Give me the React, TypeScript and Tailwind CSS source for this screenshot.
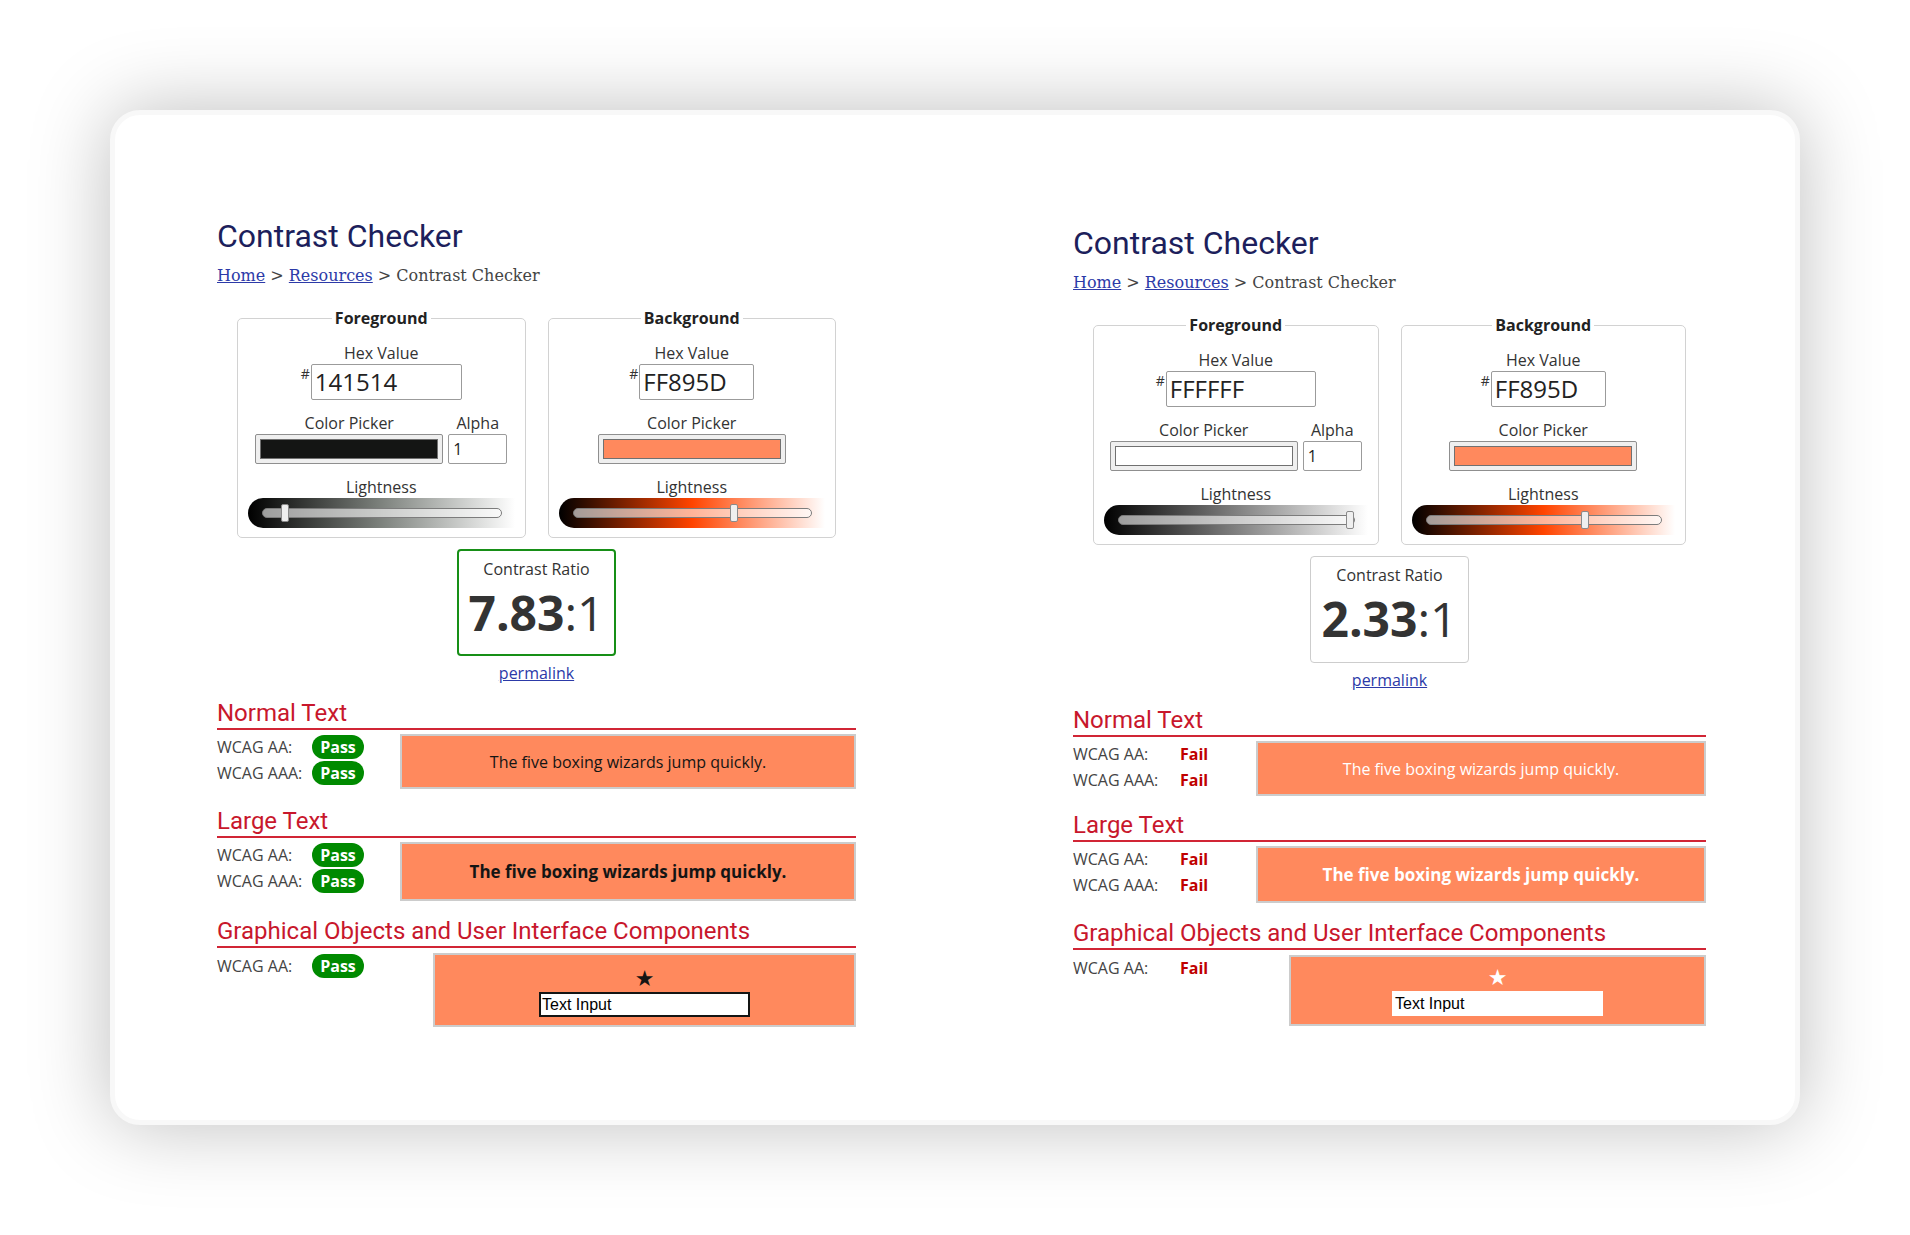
import React from 'react';

type Side = {
  fgHex: string;
  fgHexW: string;
  fgSwatch: string;
  fgGradient: string;
  fgLight: number;
  ratio: string;
  ratioBox: string;
  pass: boolean;
  sampleText: string;
  starText: string;
  inputBorder: string;
  width: string;
  shift: string;
  largeGap: string;
  largeH: string;
  graphH: string;
};

const sides: Side[] = [
  {
    fgHex: '141514',
    fgHexW: 'w-[151px]',
    fgSwatch: 'bg-[#141514]',
    fgGradient: 'bg-[linear-gradient(to_right,#000_0%,#7d827d_50%,#fff_100%)]',
    fgLight: 8,
    ratio: '7.83',
    ratioBox: 'border-2 border-[#178f17]',
    pass: true,
    sampleText: 'text-[#141514]',
    starText: 'text-[#141514]',
    inputBorder: 'border-[#141514]',
    width: 'w-[639px]',
    shift: '',
    largeGap: 'mt-[18px]',
    largeH: 'h-[59px]',
    graphH: 'h-[74px]',
  },
  {
    fgHex: 'FFFFFF',
    fgHexW: 'w-[150px]',
    fgSwatch: 'bg-white',
    fgGradient: 'bg-[linear-gradient(to_right,#000_0%,#808080_50%,#fff_100%)]',
    fgLight: 100,
    ratio: '2.33',
    ratioBox: 'border border-[#cdcdcd]',
    pass: false,
    sampleText: 'text-white',
    starText: 'text-white',
    inputBorder: 'border-white',
    width: 'w-[633px]',
    shift: 'mt-[7px]',
    largeGap: 'mt-[15px]',
    largeH: 'h-[57px]',
    graphH: 'h-[71px]',
  },
];

const bgGradient = 'bg-[linear-gradient(to_right,#000_0%,#ff4400_50%,#fff_100%)]';

function Slider({ gradient, light }: { gradient: string; light: number }) {
  return (
    <div className={`h-[30px] w-full rounded-l-full flex items-center pl-[14px] pr-[13px] ${gradient}`}>
      <div className="relative flex-1 h-[10px] rounded-full border border-[#7c7c7c] bg-white/60">
        <div
          className="absolute top-1/2 -translate-y-1/2 -translate-x-1/2 w-[8px] h-[18px] rounded-[2px] border border-[#8a8a8a] bg-[#efefef]"
          style={{ left: `calc(4px + (100% - 8px) * ${light / 100})` }}
        />
      </div>
    </div>
  );
}

function ColorField({
  title,
  hex,
  hexW,
  swatch,
  alpha,
  gradient,
  light,
}: {
  title: string;
  hex: string;
  hexW: string;
  swatch: string;
  alpha: boolean;
  gradient: string;
  light: number;
}) {
  return (
    <fieldset className="flex-1 min-w-0 rounded-[5px] border border-[#d2d2d2] px-[10px] pt-[12px] pb-[9px] text-center text-[#333]">
      <legend className="mx-auto px-[3px] text-[16px] leading-[24px] font-bold text-[#222]">{title}</legend>
      <div className="text-[16px] leading-[22px]">Hex Value</div>
      <div className="flex justify-center items-start">
        <span className="text-[14px] leading-[14px] mt-[3px] mr-[1px]">#</span>
        <div className={`h-[36px] ${hexW} border border-[#9b9b9b] rounded-[2px] pl-[3px] text-left text-[24px] leading-[34px] text-[#222]`}>
          {hex}
        </div>
      </div>
      <div className="mt-[12px] flex justify-center gap-[5px]">
        <div className="flex flex-col items-center">
          <div className="text-[16px] leading-[22px]">Color Picker</div>
          <div className="w-[188px] h-[30px] border border-[#8f8f8f] rounded-[2px] bg-[#efefef] p-[4px]">
            <div className={`h-full border border-[#707070] ${swatch}`} />
          </div>
        </div>
        {alpha && (
          <div className="flex flex-col items-center">
            <div className="text-[16px] leading-[22px]">Alpha</div>
            <div className="w-[59px] h-[30px] border border-[#9b9b9b] rounded-[2px] pl-[4px] text-left text-[16px] leading-[28px] text-[#222]">
              1
            </div>
          </div>
        )}
      </div>
      <div className="mt-[12px] text-[16px] leading-[22px]">Lightness</div>
      <Slider gradient={gradient} light={light} />
    </fieldset>
  );
}

function Heading({ children, className }: { children: React.ReactNode; className: string }) {
  return (
    <h2
      className={`font-['Roboto',sans-serif] text-[24px] leading-[28px] text-[#c8172c] border-b-2 border-[#d12535] pb-[1px] ${className}`}
    >
      {children}
    </h2>
  );
}

function Result({ label, pass, labelW }: { label: string; pass: boolean; labelW: string }) {
  return (
    <div className="flex items-center h-[26px]">
      <span className={`${labelW} shrink-0 text-[16px] text-[#444]`}>{label}</span>
      {pass ? (
        <span className="inline-flex items-center justify-center w-[52px] h-[24px] rounded-full bg-[#008a00] text-white font-bold text-[16px]">
          Pass
        </span>
      ) : (
        <span className="text-[#c00000] font-bold text-[16px]">Fail</span>
      )}
    </div>
  );
}

function Checker({ s }: { s: Side }) {
  const labelW = s.pass ? 'w-[95px]' : 'w-[107px]';
  return (
    <div className={`${s.width} ${s.shift} shrink-0`}>
      <h1 className="font-['Roboto',sans-serif] text-[32px] leading-[36px] text-[#1d1f5c]">Contrast Checker</h1>
      <div className="mt-[10px] font-['DejaVu_Serif',serif] text-[16px] leading-[24px] text-[#444]">
        <a className="underline text-[#2c3aa8]">Home</a> &gt; <a className="underline text-[#2c3aa8]">Resources</a> &gt; Contrast
        Checker
      </div>

      <div className="mt-[18px] flex gap-[22px] px-[20px]">
        <ColorField
          title="Foreground"
          hex={s.fgHex}
          hexW={s.fgHexW}
          swatch={s.fgSwatch}
          alpha
          gradient={s.fgGradient}
          light={s.fgLight}
        />
        <ColorField
          title="Background"
          hex="FF895D"
          hexW="w-[115px]"
          swatch="bg-[#ff895d]"
          alpha={false}
          gradient={bgGradient}
          light={68}
        />
      </div>

      <div className={`mx-auto mt-[11px] w-[159px] h-[107px] rounded-[4px] ${s.ratioBox} flex flex-col items-center text-[#333]`}>
        <div className="mt-[7px] text-[16px] leading-[22px]">Contrast Ratio</div>
        <div className="mt-[9px] text-[48px] leading-[48px]">
          <span className="font-bold">{s.ratio}</span>:1
        </div>
      </div>
      <div className="mt-[6px] text-center text-[16px] leading-[22px]">
        <a className="underline text-[#2c3aa8]">permalink</a>
      </div>

      <Heading className="mt-[15px]">Normal Text</Heading>
      <div className="mt-[4px] flex">
        <div className="w-[183px] shrink-0">
          <Result label="WCAG AA:" pass={s.pass} labelW={labelW} />
          <Result label="WCAG AAA:" pass={s.pass} labelW={labelW} />
        </div>
        <div className={`flex-1 h-[55px] border-2 border-[#cccccc] bg-[#ff895d] flex items-center justify-center text-[16px] ${s.sampleText}`}>
          The five boxing wizards jump quickly.
        </div>
      </div>

      <Heading className={s.largeGap}>Large Text</Heading>
      <div className="mt-[4px] flex">
        <div className="w-[183px] shrink-0">
          <Result label="WCAG AA:" pass={s.pass} labelW={labelW} />
          <Result label="WCAG AAA:" pass={s.pass} labelW={labelW} />
        </div>
        <div className={`flex-1 ${s.largeH} border-2 border-[#cccccc] bg-[#ff895d] flex items-center justify-center text-[17px] font-bold ${s.sampleText}`}>
          The five boxing wizards jump quickly.
        </div>
      </div>

      <Heading className="mt-[16px]">Graphical Objects and User Interface Components</Heading>
      <div className="mt-[5px] flex">
        <div className="w-[216px] shrink-0">
          <Result label="WCAG AA:" pass={s.pass} labelW={labelW} />
        </div>
        <div className={`flex-1 ${s.graphH} border-2 border-[#cccccc] bg-[#ff895d] flex flex-col items-center justify-end pb-[8px]`}>
          <div className={`font-['DejaVu_Sans',sans-serif] text-[22px] leading-[20px] ${s.starText}`}>★</div>
          <div
            className={`mt-[3px] w-[211px] h-[25px] border-2 ${s.inputBorder} bg-white pl-[1px] font-['Liberation_Sans',Arial,sans-serif] text-[16px] leading-[21px] text-black`}
          >
            Text Input
          </div>
        </div>
      </div>
    </div>
  );
}

export default function App() {
  return (
    <div className="w-[1910px] h-[1235px] bg-white pt-[110px] pl-[110px] font-['Open_Sans',sans-serif]">
      <div className="w-[1690px] h-[1015px] rounded-[30px] border-[5px] border-[#f8f8f8] bg-white shadow-[0_0_80px_rgba(0,0,0,0.26)] pt-[103px] pl-[102px] flex items-start gap-[217px]">
        {sides.map((s, i) => (
          <Checker key={i} s={s} />
        ))}
      </div>
    </div>
  );
}
